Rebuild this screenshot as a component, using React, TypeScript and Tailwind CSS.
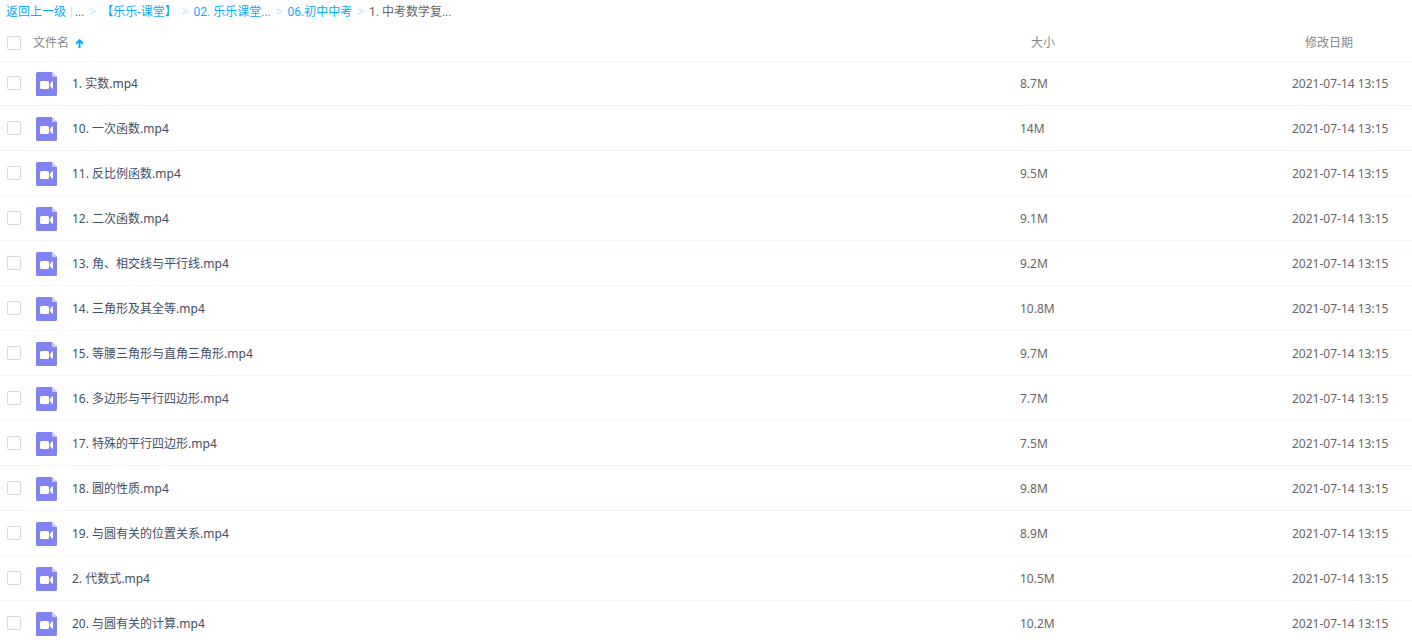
import React from 'react';

const files: { name: string; size: string }[] = [
  { name: '1. 实数.mp4', size: '8.7M' },
  { name: '10. 一次函数.mp4', size: '14M' },
  { name: '11. 反比例函数.mp4', size: '9.5M' },
  { name: '12. 二次函数.mp4', size: '9.1M' },
  { name: '13. 角、相交线与平行线.mp4', size: '9.2M' },
  { name: '14. 三角形及其全等.mp4', size: '10.8M' },
  { name: '15. 等腰三角形与直角三角形.mp4', size: '9.7M' },
  { name: '16. 多边形与平行四边形.mp4', size: '7.7M' },
  { name: '17. 特殊的平行四边形.mp4', size: '7.5M' },
  { name: '18. 圆的性质.mp4', size: '9.8M' },
  { name: '19. 与圆有关的位置关系.mp4', size: '8.9M' },
  { name: '2. 代数式.mp4', size: '10.5M' },
  { name: '20. 与圆有关的计算.mp4', size: '10.2M' },
];

const MODIFIED = '2021-07-14 13:15';

function VideoIcon() {
  return (
    <svg className="mt-0.5 h-6 w-[21px] shrink-0" viewBox="0 0 21 24" aria-hidden="true">
      <path d="M1.500 0H16l5 5v17.500a1.500 1.500 0 0 1-1.500 1.500h-18A1.500 1.500 0 0 1 0 22.500V1.500A1.500 1.500 0 0 1 1.500 0z" fill="#8183f1" />
      <path d="M16 0l5 5h-4a1 1 0 0 1-1-1z" fill="#cdcdfa" />
      <rect x="4" y="9" width="9" height="8" rx="1.500" fill="#fff" />
      <path d="M13.500 13l2.300-3.500q1.200-.8 1.200.5v6q0 1.300-1.200.5z" fill="#fff" />
    </svg>
  );
}

function SortArrow() {
  return (
    <svg className="h-[9px] w-[9px]" viewBox="0 0 9 9" aria-hidden="true">
      <path d="M4.500 9V1.500M1 4.700L4.500 1.200L8 4.700" fill="none" stroke="#09aaff" strokeWidth="2" />
    </svg>
  );
}

function Tick({ label }: { label: string }) {
  return (
    <input
      type="checkbox"
      aria-label={label}
      className="block h-3.5 w-3.5 shrink-0 appearance-none rounded-xs border border-[#d5dae4] bg-white checked:bg-[#09aaff]"
    />
  );
}

function Crumb({ children }: { children: React.ReactNode }) {
  return (
    <a href="#" className="text-[#09aaff]">
      {children}
    </a>
  );
}

function Sep() {
  return <span className="mx-[5px] font-['Noto_Sans',sans-serif] text-[#c4dbfe]">&gt;</span>;
}

export default function App() {
  return (
    <div className="bg-white font-['Noto_Sans','Noto_Sans_CJK_SC',sans-serif] text-xs">
      <nav className="mb-0.5 flex h-6 items-center px-1.5 font-['Roboto','Noto_Sans_CJK_SC',sans-serif] whitespace-nowrap text-[#666]">
        <Crumb>返回上一级</Crumb>
        <span className="mr-0.5 ml-1 text-[#c4dbfe]">|</span>
        <span>...</span>
        <Sep />
        <Crumb>【乐乐-课堂】</Crumb>
        <Sep />
        <Crumb>02. 乐乐课堂...</Crumb>
        <Sep />
        <Crumb>06.初中中考</Crumb>
        <Sep />
        <span>1. 中考数学复...</span>
      </nav>
      <table className="w-full table-fixed border-collapse text-left">
        <colgroup>
          <col />
          <col className="w-[272px]" />
          <col className="w-[120px]" />
        </colgroup>
        <thead>
          <tr className="h-[35px] border-b border-[#f2f6fd] text-[#888]">
            <th className="p-0 pl-[7px] font-normal">
              <div className="flex items-center gap-3">
                <Tick label="全选" />
                <button type="button" className="flex items-center gap-1.5">
                  文件名
                  <SortArrow />
                </button>
              </div>
            </th>
            <th className="p-0 pl-[11px] font-normal">大小</th>
            <th className="p-0 pl-[13px] font-normal">修改日期</th>
          </tr>
        </thead>
        <tbody>
          {files.map((f) => (
            <tr key={f.name} className="h-[45px] border-b border-[#f2f6fd] text-[#666] first:h-11">
              <td className="p-0 pl-[7px]">
                <div className="flex items-center gap-[15px]">
                  <Tick label={f.name} />
                  <VideoIcon />
                  <a href="#" className="truncate pt-0.5 text-[#424e67]">
                    {f.name}
                  </a>
                </div>
              </td>
              <td className="p-0 pt-0.5">{f.size}</td>
              <td className="p-0 pt-0.5 whitespace-nowrap">{MODIFIED}</td>
            </tr>
          ))}
        </tbody>
      </table>
    </div>
  );
}
